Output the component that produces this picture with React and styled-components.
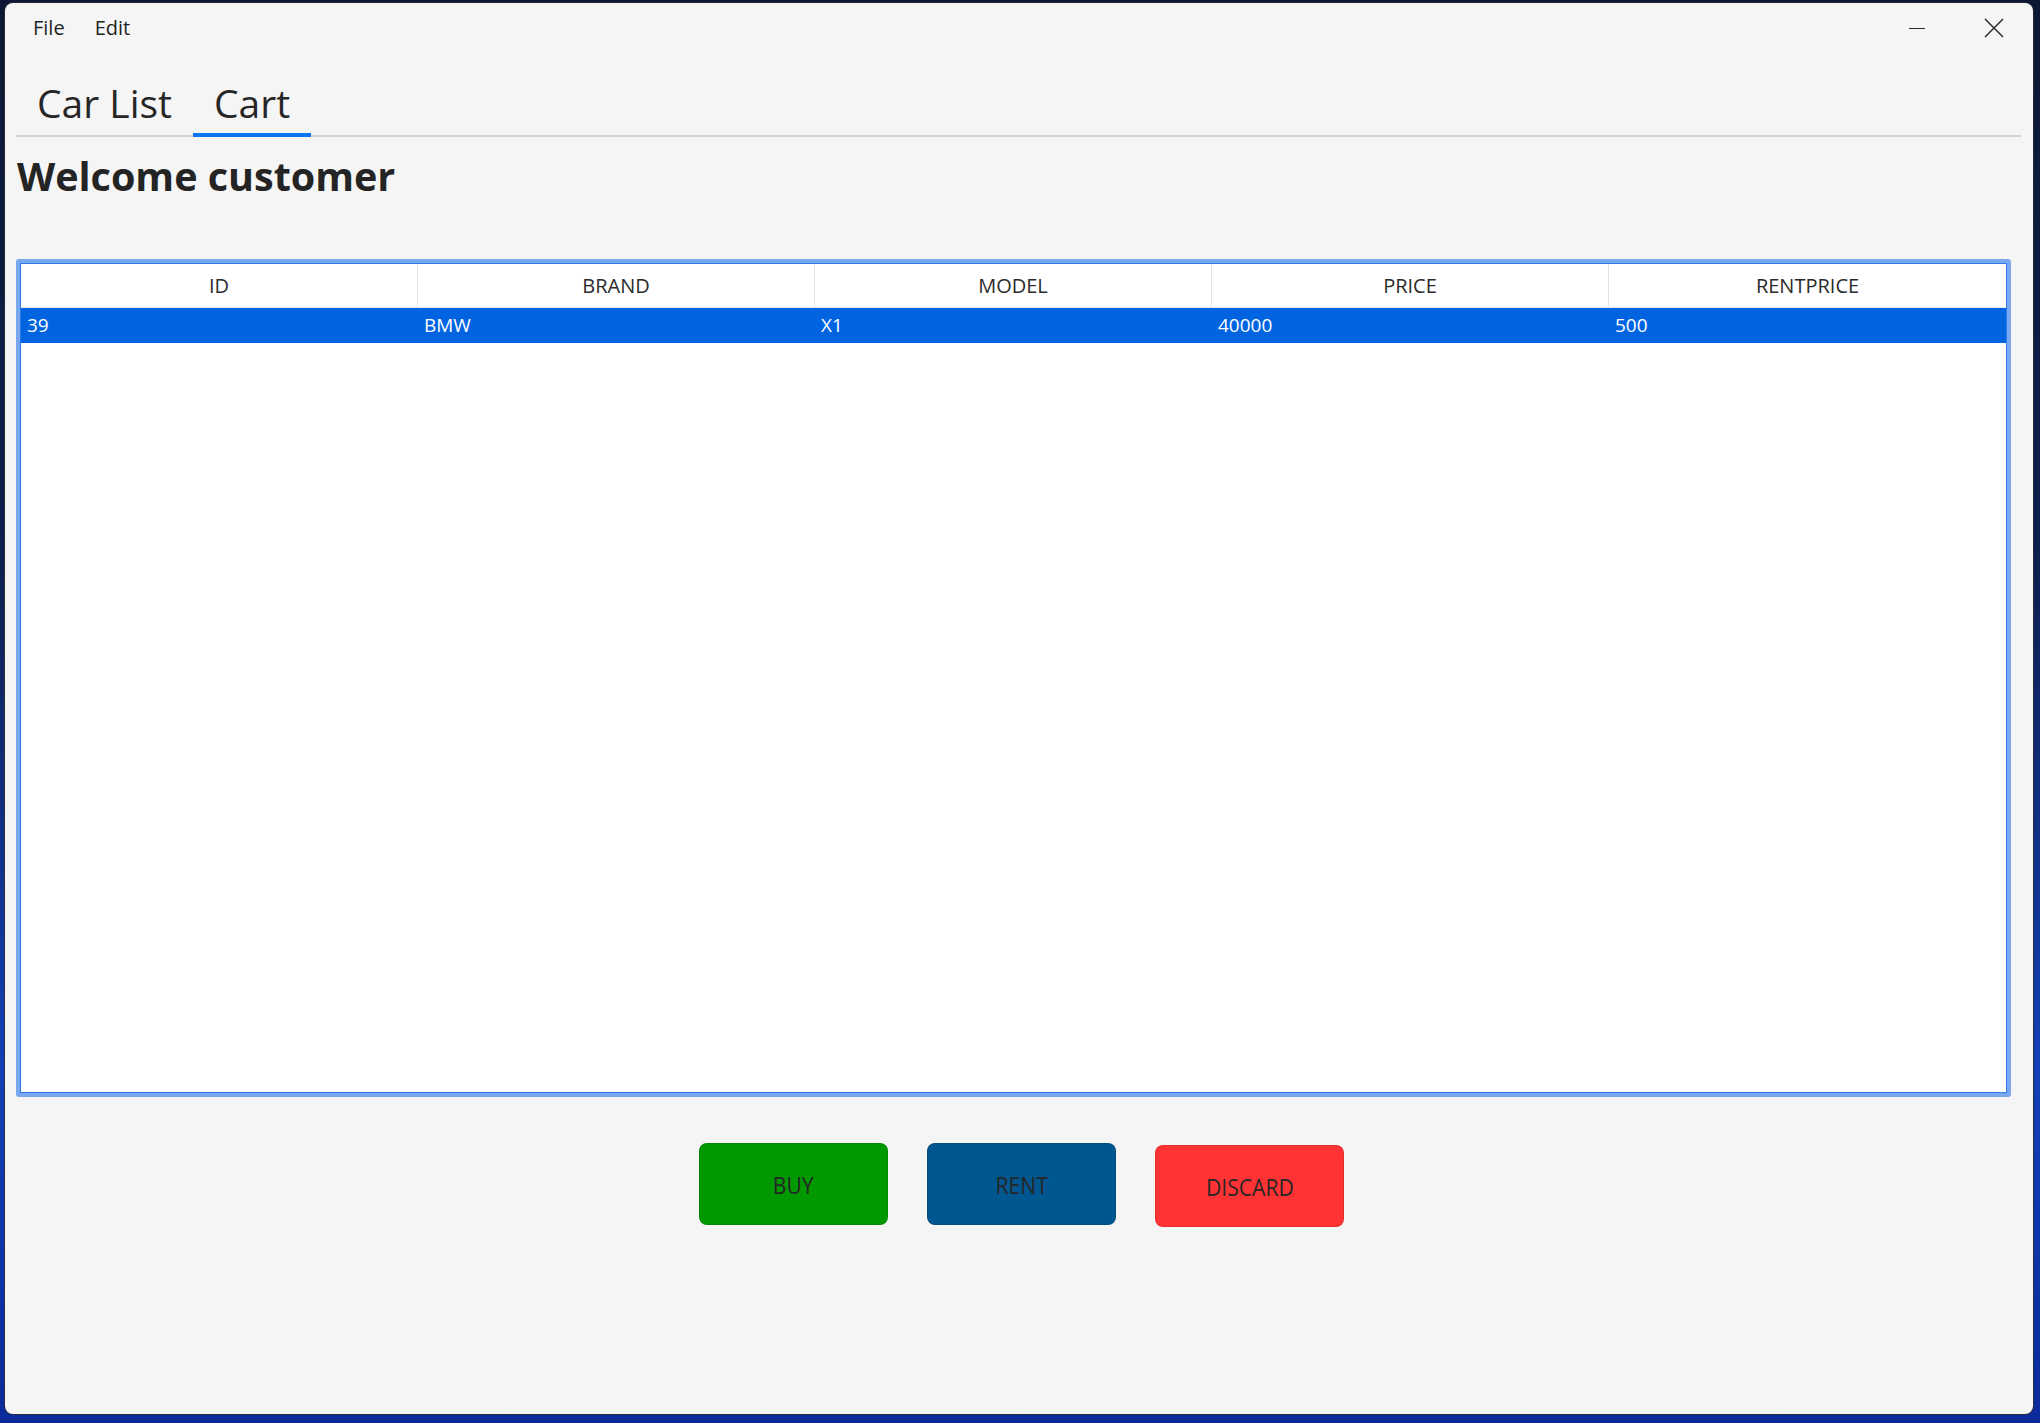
import React from "react";
import styled, { createGlobalStyle } from "styled-components";

const GlobalStyle = createGlobalStyle`
    html, body {
        margin: 0;
        padding: 0;
    }
    body {
        width: 2040px;
        height: 1423px;
        overflow: hidden;
        font-family: "Open Sans", "Noto Sans", sans-serif;
        background: linear-gradient(180deg, #0c1833 0%, #0d1f4f 40%, #1340b8 75%, #0a2a9a 100%);
    }
`;

const Desktop = styled.div`
    box-sizing: border-box;
    width: 2040px;
    height: 1423px;
    padding: 3px 7px 9px 5px;
`;

const Window = styled.div`
    display: flex;
    flex-direction: column;
    height: 100%;
    background: #f5f5f5;
    border-radius: 8px;
    box-shadow: 0 0 0 1px rgba(40, 44, 52, 0.9);
    overflow: hidden;
`;

const TitleBar = styled.div`
    display: flex;
    align-items: flex-start;
    box-sizing: border-box;
    height: 76px;
    padding: 10px 1px 0 13px;
`;

const MenuItem = styled.span`
    padding: 0 15px;
    font-size: 20px;
    line-height: 30px;
    color: #1f1f1f;
`;

const Spacer = styled.div`
    flex: 1;
`;

const Controls = styled.div`
    display: flex;
`;

const ControlButton = styled.div`
    display: flex;
    align-items: center;
    justify-content: center;
    width: 77px;
    height: 30px;
    color: #2b2b2b;
`;

const TabPane = styled.div`
    display: flex;
    flex-direction: column;
    margin: 0 12px 0 11px;
`;

const TabHeader = styled.div`
    display: flex;
    border-bottom: 2px solid #d4d4d4;
`;

const Tab = styled.div`
    padding: 0 21px 6px;
    margin-bottom: -2px;
    font-size: 39px;
    line-height: 48px;
    color: #262626;
    border-bottom: 4px solid ${(p) => (p.$active ? "#0a75f0" : "transparent")};
`;

const Heading = styled.h1`
    margin: 14px 0 0 1px;
    font-size: 39.5px;
    line-height: 50px;
    font-weight: 700;
    color: #242424;
`;

const TableFrame = styled.div`
    box-sizing: border-box;
    height: 838px;
    margin: 58px 10px 0 0;
    border: 4px solid #79a8f1;
    border-radius: 3px;
`;

const Table = styled.div`
    box-sizing: border-box;
    height: 100%;
    background: #ffffff;
    border: 1px solid #2f7ae9;
`;

const Row = styled.div`
    display: grid;
    grid-template-columns: repeat(5, 1fr);
`;

const HeaderRow = styled(Row)`
    height: 43px;
    border-bottom: 1px solid #e8e8e8;
`;

const HeaderCell = styled.div`
    text-align: center;
    font-size: 20px;
    line-height: 43px;
    color: #2b2b2b;
    border-right: 1px solid #e2e2e2;

    &:last-child {
        border-right: none;
    }
`;

const DataRow = styled(Row)`
    height: 35px;
    background: ${(p) => (p.$selected ? "#0064e1" : "transparent")};
    color: ${(p) => (p.$selected ? "#ffffff" : "#222222")};
`;

const DataCell = styled.div`
    padding-left: 6px;
    font-size: 19px;
    line-height: 35px;
`;

const ButtonRow = styled.div`
    display: flex;
    align-items: flex-start;
    justify-content: center;
    gap: 39px;
    margin-top: 46px;
    padding-left: 6px;
`;

const ActionButton = styled.button`
    display: flex;
    align-items: center;
    justify-content: center;
    width: 189px;
    height: 82px;
    margin-top: ${(p) => p.$offset || 0}px;
    padding: 0;
    border: 1px solid rgba(0, 0, 0, 0.1);
    border-radius: 8px;
    background: ${(p) => p.$color};
    font-family: "Open Sans", sans-serif;
    color: #262626;
    cursor: pointer;
`;

const ButtonLabel = styled.span`
    display: inline-block;
    font-size: 24px;
    transform: scaleX(0.88);
`;

const columns = ["ID", "BRAND", "MODEL", "PRICE", "RENTPRICE"];
const cart = [{ id: 39, brand: "BMW", model: "X1", price: 40000, rent: 500 }];

const App = () => {
    return (
        <>
            <GlobalStyle />
            <Desktop>
                <Window>
                    <TitleBar>
                        <MenuItem>File</MenuItem>
                        <MenuItem>Edit</MenuItem>
                        <Spacer />
                        <Controls>
                            <ControlButton>
                                <svg width="18" height="18" viewBox="0 0 18 18">
                                    <line x1="1" y1="9.5" x2="17" y2="9.5" stroke="currentColor" strokeWidth="1.2" />
                                </svg>
                            </ControlButton>
                            <ControlButton>
                                <svg width="20" height="20" viewBox="0 0 20 20">
                                    <path d="M1 1 L19 19 M19 1 L1 19" stroke="currentColor" strokeWidth="1.5" fill="none" />
                                </svg>
                            </ControlButton>
                        </Controls>
                    </TitleBar>
                    <TabPane>
                        <TabHeader>
                            <Tab>Car List</Tab>
                            <Tab $active>Cart</Tab>
                        </TabHeader>
                        <Heading>Welcome customer</Heading>
                        <TableFrame>
                            <Table>
                                <HeaderRow>
                                    {columns.map((c) => (
                                        <HeaderCell key={c}>{c}</HeaderCell>
                                    ))}
                                </HeaderRow>
                                {cart.map((car) => (
                                    <DataRow key={car.id} $selected>
                                        <DataCell>{car.id}</DataCell>
                                        <DataCell>{car.brand}</DataCell>
                                        <DataCell>{car.model}</DataCell>
                                        <DataCell>{car.price}</DataCell>
                                        <DataCell>{car.rent}</DataCell>
                                    </DataRow>
                                ))}
                            </Table>
                        </TableFrame>
                        <ButtonRow>
                            <ActionButton $color="#009900"><ButtonLabel>BUY</ButtonLabel></ActionButton>
                            <ActionButton $color="#00568e"><ButtonLabel>RENT</ButtonLabel></ActionButton>
                            <ActionButton $color="#ff3333" $offset={2}><ButtonLabel>DISCARD</ButtonLabel></ActionButton>
                        </ButtonRow>
                    </TabPane>
                </Window>
            </Desktop>
        </>
    );
};

export default App;
